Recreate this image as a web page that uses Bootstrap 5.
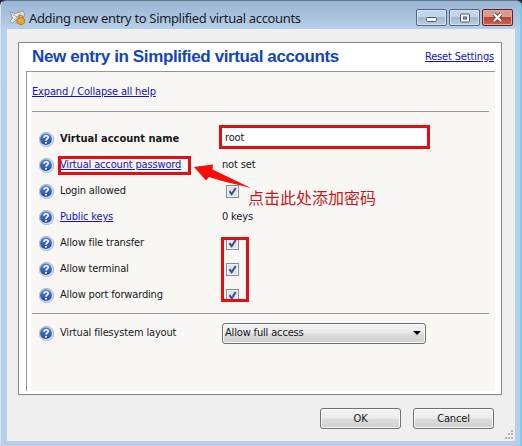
<!DOCTYPE html>
<html lang="en">
<head>
<meta charset="utf-8">
<title>Adding new entry to Simplified virtual accounts</title>
<link href="https://cdn.jsdelivr.net/npm/bootstrap@5.3.0/dist/css/bootstrap.min.css" rel="stylesheet">
<style>
body{width:522px;height:446px;overflow:hidden;background:#202c38;font:11px/16px "DejaVu Sans Condensed","Noto Sans","Noto Sans CJK SC",sans-serif;letter-spacing:-.16px;color:#17171c}
.win{height:446px;padding:0 7px 5px 6px;background:linear-gradient(90deg,transparent 519px,#5ccdf0 520px),linear-gradient(#9ab5d3 0,#b8d0e9 29px,#b9cfe9 100%);border-radius:6px 6px 0 0;border-left:1px solid #d7e5f2;border-top:1px solid #64788c}
.titlebar{height:28px;padding:0 2px 0 2px}
.caption-text{font:13px/20px "Noto Sans",sans-serif;letter-spacing:-.34px;color:#1b1b2c;margin-left:3px;padding-top:3px}
.wbtn{width:31px;height:17px;border:1px solid #52677f;border-radius:2px;background:linear-gradient(#c4d5e8 45%,#a0b8d2 50%,#b8cfe6);box-shadow:inset 0 0 0 1px #d3e2f1}
.wbtn.close-x{background:linear-gradient(#dc9b8f 45%,#bd4132 50%,#d06352);border-color:#5c2523;box-shadow:inset 0 0 0 1px #e1a69c}
.client{height:412px;background:#efefef;padding:13px 13px 0 11px}
.panel{height:353px;border:1px solid #858585;background:#fff;padding:0 6px 2px 7px}
.head{height:28px;padding:0 1px 0 6px}
.heading{font:bold 17px/28px "Liberation Sans",Arial,sans-serif;letter-spacing:-.38px;color:#1245bd}
a{color:#1414bd;text-decoration:underline;text-underline-offset:1px}
.inner{height:320px;border-top:1px solid #969696;border-left:4px double #fff;border-left:1px solid #969696;background:linear-gradient(90deg,#fff 4px,#f8f7f3 4px);padding:0 6px 0 5px}
.rule{height:1px;background:#999}
.expand{height:39px}
.line{height:26px;padding-left:1px}
.lbl{width:162px;margin-left:6px;white-space:nowrap}
.lbl.fw-bold{letter-spacing:0}
.q{width:15px;height:15px;margin-left:6px}
.cb{width:13px;height:13px;border:1px solid #858d96;background:#dce5f2;box-shadow:inset 0 0 0 1px #f5f6f7;margin-left:4px}
.cb svg{display:block}
.namebox{width:211px;height:24px;border:3px solid #e60c12;background:#fff;padding-left:3px;line-height:19px;margin:-5px 0 0 -3px}
.sel{width:204px;height:21px;border:1px solid #6f6f6f;border-radius:3px;background:linear-gradient(#f3f3f3,#e9e9e9 48%,#dcdcdc 52%,#cecece);box-shadow:inset 0 0 0 1px #f8f8f8;padding:0 4px 0 2px}
.pbtn{width:81px;height:21px;border:1px solid #707070;border-radius:3px;background:linear-gradient(#f3f3f3,#ebebeb 48%,#dddddd 52%,#cfcfcf);box-shadow:inset 0 0 0 1px #fafafa}
.foot{padding:13px 8px 0 0;gap:12px}
.mark-red{position:absolute;border:3px solid #e60c12}
.m1{left:58px;top:156px;width:133px;height:19px}
.m2{left:221px;top:237px;width:28px;height:65px}
.arrow{position:absolute;left:194px;top:164px}
.note{position:absolute;left:248px;top:187px;font:16px/20px "Noto Sans CJK SC",sans-serif;letter-spacing:0;color:#c8161c;white-space:nowrap}
.grip{position:absolute;left:504px;top:430px}
</style>
<script src="https://cdn.jsdelivr.net/npm/bootstrap@5.3.0/dist/js/bootstrap.bundle.min.js"></script>
</head>
<body>
<svg width="0" height="0" class="position-absolute"><defs>
<linearGradient id="blue" x2="0" y2="1"><stop stop-color="#5a86d0"/><stop offset="1" stop-color="#1d4aa5"/></linearGradient>
<symbol id="help" viewBox="0 0 15 15"><circle cx="7.5" cy="7.5" r="7.2" fill="#d5dfef" stroke="#8b9cb9" stroke-width=".6"/><circle cx="7" cy="7.2" r="5.9" fill="url(#blue)"/><path d="M5 5.7C5 3.2 9.3 3.2 9.2 5.5 9.1 7 7.2 6.8 7.1 8.7" fill="none" stroke="#fff" stroke-width="1.6"/><circle cx="7" cy="10.8" r="1" fill="#fff"/></symbol>
<symbol id="tick" viewBox="0 0 11 11"><path d="M2.5 5.2 4.7 8.3 8.7 2" fill="none" stroke="#3c5082" stroke-width="2"/></symbol>
</defs></svg>
<div class="win">
  <div class="titlebar d-flex">
    <svg width="17" height="17" viewBox="0 0 17 17" class="mt-2"><path d="M1 3 6 4.500 14 2 15.500 5 14 10 10 12 7 11 3 14.500 1 12 3.500 9Z" fill="#e9e9e9" stroke="#85888b" stroke-width=".8"/><path d="M3 5 8 8M12 4 5 11" stroke="#a9a9a9"/><path d="M9.500 9C9 5.500 14 5.500 14 9.500" fill="none" stroke="#b98b2c" stroke-width="1.3"/><path d="M8 9.500 11.500 8 15.500 10V14L12 16 8 14Z" fill="#e9a22c" stroke="#a06a16" stroke-width=".7"/></svg>
    <div class="caption-text text-nowrap mt-1">Adding new entry to Simplified virtual accounts</div>
    <div class="d-flex ms-auto mt-2" style="gap:2px">
      <div class="wbtn d-flex"><svg class="m-auto" width="13" height="11"><rect x="1.500" y="5.500" width="10" height="4" rx="1" fill="#f4f4f4" stroke="#535666"/></svg></div>
      <div class="wbtn d-flex"><svg class="m-auto" width="12" height="10"><rect x="1.500" y="1" width="9" height="8" rx="1" fill="#f4f4f4" stroke="#535666"/><rect x="4.500" y="4" width="3" height="2" fill="#9fb4cb" stroke="#535666"/></svg></div>
      <div class="wbtn close-x d-flex"><svg class="m-auto" width="13" height="11"><path d="M3 2 10 9M10 2 3 9" stroke="#594149" stroke-width="4"/><path d="M3 2 10 9M10 2 3 9" stroke="#f6f6f6" stroke-width="2.400"/></svg></div>
    </div>
  </div>
  <div class="client">
    <div class="panel">
      <div class="head d-flex justify-content-between align-items-center"><div class="heading text-nowrap">New entry in Simplified virtual accounts</div><a href="#" class="text-nowrap">Reset Settings</a></div>
      <div class="inner">
        <div class="expand d-flex align-items-center"><a href="#">Expand / Collapse all help</a></div>
        <div class="rule"></div>
        <div style="height:14px"></div>
        <div class="line d-flex align-items-center"><svg class="q"><use href="#help"/></svg><div class="lbl fw-bold">Virtual account name</div><div class="namebox">root</div></div>
        <div class="line d-flex align-items-center"><svg class="q"><use href="#help"/></svg><div class="lbl"><a href="#">Virtual account password</a></div><div>not set</div></div>
        <div class="line d-flex align-items-center"><svg class="q"><use href="#help"/></svg><div class="lbl">Login allowed</div><div class="cb"><svg width="11" height="11"><use href="#tick"/></svg></div></div>
        <div class="line d-flex align-items-center"><svg class="q"><use href="#help"/></svg><div class="lbl"><a href="#">Public keys</a></div><div>0 keys</div></div>
        <div class="line d-flex align-items-center"><svg class="q"><use href="#help"/></svg><div class="lbl">Allow file transfer</div><div class="cb"><svg width="11" height="11"><use href="#tick"/></svg></div></div>
        <div class="line d-flex align-items-center"><svg class="q"><use href="#help"/></svg><div class="lbl">Allow terminal</div><div class="cb"><svg width="11" height="11"><use href="#tick"/></svg></div></div>
        <div class="line d-flex align-items-center"><svg class="q"><use href="#help"/></svg><div class="lbl">Allow port forwarding</div><div class="cb"><svg width="11" height="11"><use href="#tick"/></svg></div></div>
        <div style="height:5px"></div>
        <div class="rule"></div>
        <div style="height:6px"></div>
        <div class="line d-flex align-items-center"><svg class="q"><use href="#help"/></svg><div class="lbl">Virtual filesystem layout</div><div class="sel d-flex align-items-center justify-content-between"><span>Allow full access</span><svg width="8" height="4"><path d="M0 0H8L4 4Z"/></svg></div></div>
      </div>
    </div>
    <div class="foot d-flex justify-content-end"><div class="pbtn d-flex align-items-center justify-content-center">OK</div><div class="pbtn d-flex align-items-center justify-content-center">Cancel</div></div>
  </div>
</div>
<div class="mark-red m1"></div>
<div class="mark-red m2"></div>
<svg class="arrow" width="58" height="25"><path d="M0 3 19 .5 18.500 5.500 57 24 28 17 15 13 12 16.500Z" fill="#fa0a0a"/></svg>
<div class="note">点击此处添加密码</div>
<svg class="grip" width="10" height="10" fill="#b5b5b5"><path d="M7 0h2v2H7zM4 3h2v2H4zM7 3h2v2H7zM1 7h2v2H1zM4 7h2v2H4zM7 7h2v2H7z"/></svg>
</body>
</html>
